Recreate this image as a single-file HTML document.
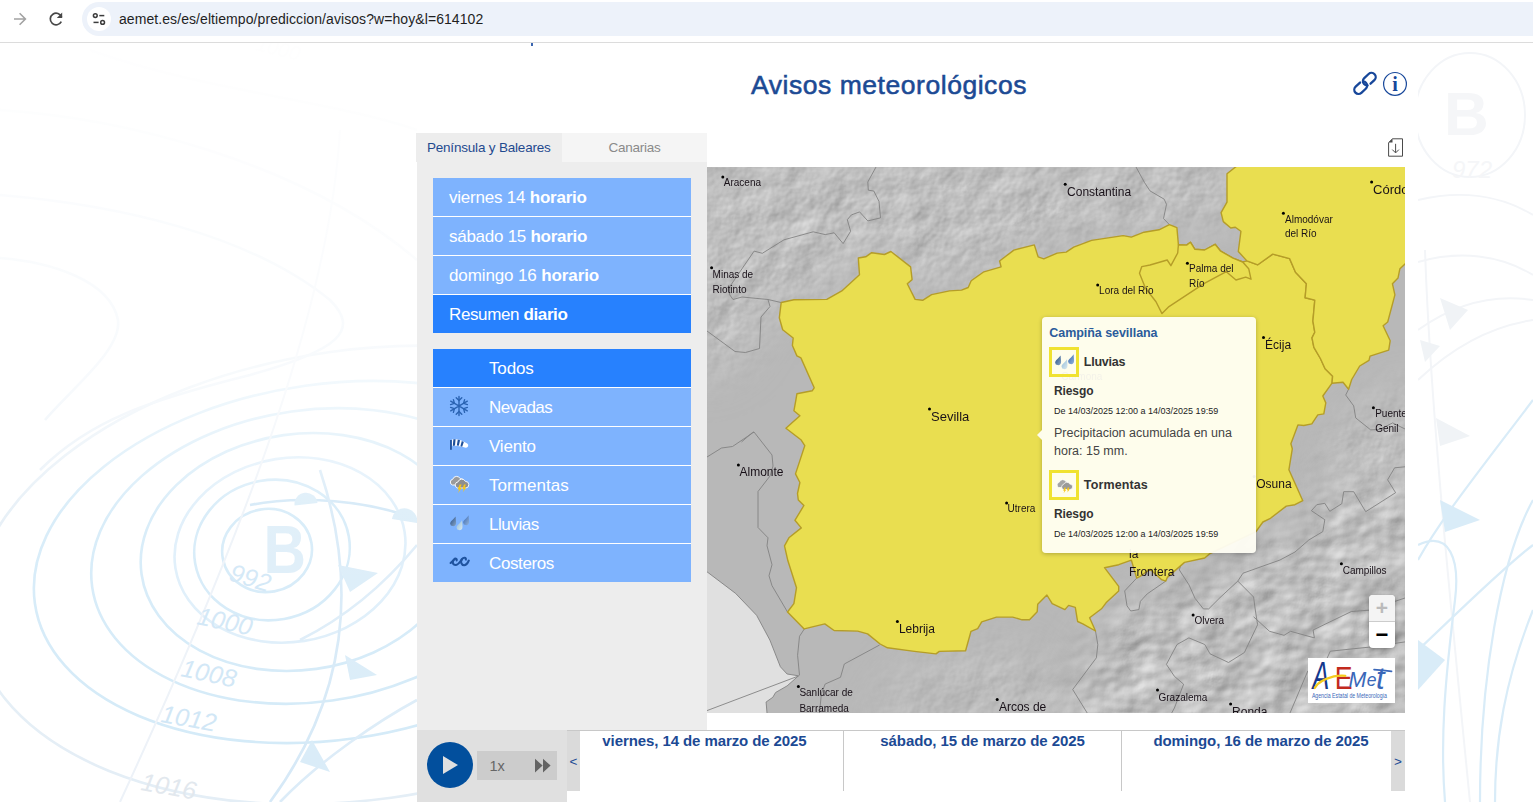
<!DOCTYPE html>
<html lang="es">
<head>
<meta charset="utf-8">
<title>Avisos meteorológicos</title>
<style>
*{box-sizing:border-box;margin:0;padding:0}
html,body{width:1533px;height:802px;overflow:hidden;background:#fff}
body{position:relative;font-family:"Liberation Sans",sans-serif;color:#222}
.abs{position:absolute}
/* browser chrome */
#chrome{left:0;top:0;width:1533px;height:43px;background:#fff;border-bottom:1px solid #dcdcdc}
#pill{left:82px;top:2px;width:1470px;height:34px;border-radius:17px;background:#edf2fa}
#site{left:87px;top:7px;width:24px;height:24px;border-radius:12px;background:#fff}
#url{left:119px;top:10px;font-size:14px;line-height:18px;color:#1f1f1f;white-space:nowrap;letter-spacing:0.075px}
/* page */
#content{left:417px;top:43px;width:1001px;height:759px;background:#fff}
#h1{left:751px;top:67px;font-size:26.5px;line-height:36px;font-weight:normal;-webkit-text-stroke:0.55px #1c4a94;color:#1c4a94;white-space:nowrap;letter-spacing:0.54px}
/* sidebar */
#side{left:417px;top:133px;width:290px;height:597px;background:#ededed}
.tab{top:133px;height:29px;width:145px;font-size:13.5px;line-height:29px;text-align:center;white-space:nowrap}
#tab1{left:416.3px;letter-spacing:-0.19px;color:#1f4a8f;background:#ededed}
#tab2{left:562px;letter-spacing:-0.28px;color:#8a8a8a;background:#f5f5f5}
.btn{left:433px;width:258px;height:39px;background:#7eb3fe;border-bottom:1px solid #fff;color:#fff;font-size:17px;line-height:40px;padding-left:16px;white-space:nowrap}
.btn.sel{background:#2781fe}
.btn b{font-weight:bold}
.fbtn{padding-left:56px}
/* player */
#player{left:417px;top:730px;width:150px;height:72px;background:#e0e0e0}
#play{left:426.5px;top:742px;width:46px;height:46px;border-radius:50%;background:#024f9d}
#speed{left:477px;top:751px;width:80px;height:29px;background:#cccccc}
/* timeline */
#tl{left:567px;top:730px;width:838px;height:61px;background:#fff;border-top:1px solid #c8c8c8}
.tlb{top:731px;width:13px;height:60px;background:#dadada;color:#1c4a94;font-size:13.5px;line-height:61px;text-align:center}
.day{top:731px;height:60px;width:278px;border-right:1px solid #c8c8c8;text-align:center;font-weight:bold;font-size:15px;line-height:20px;color:#1c4a94;white-space:nowrap;letter-spacing:-0.09px}
/* map */
#map{left:707px;top:167px;width:698px;height:546px;overflow:hidden;background:#b5b5b5}
.lbl{position:absolute;font-size:11px;line-height:15px;color:#111;white-space:nowrap}
.lbl.big{font-size:12px}
.dot{position:absolute;width:3px;height:3px;border-radius:50%;background:#000}

#popup{left:1042px;top:317px;width:214px;height:236px;background:rgba(255,254,244,0.95);border-radius:4px;box-shadow:0 1px 4px rgba(0,0,0,0.25)}
#parrow{left:1037px;top:430px;width:0;height:0;border-top:5px solid transparent;border-bottom:5px solid transparent;border-right:5px solid rgba(255,254,244,0.96)}
.pt{white-space:nowrap;line-height:15px}
.ico{width:30px;height:30px;border:3px solid #f0e231}
#zoomc{left:1369px;top:595px;width:26px;height:53px;border-radius:4px;background:#fff;box-shadow:0 1px 4px rgba(0,0,0,0.35);overflow:hidden;font-family:"Liberation Sans",sans-serif;font-weight:bold;text-align:center}
#zoomc .zp{height:27px;line-height:25px;font-size:21px;color:#bbb;background:#f4f4f4;border-bottom:1px solid #ccc}
#zoomc .zm{height:26px;line-height:26px;font-size:22px;color:#000}
#logo{left:1308px;top:658px;width:87px;height:45px;background:#fff}
</style>
</head>
<body>
<div id="content" class="abs"></div>
<!--BG-->
<svg id="bgl" class="abs" style="left:0;top:43px" width="417" height="759" viewBox="0 43 417 759">
<defs>
<linearGradient id="fadeL" x1="0" y1="43" x2="0" y2="802" gradientUnits="userSpaceOnUse">
<stop offset="0" stop-color="#fff" stop-opacity="0.95"/><stop offset="0.45" stop-color="#fff" stop-opacity="0.7"/><stop offset="0.62" stop-color="#fff" stop-opacity="0.15"/><stop offset="1" stop-color="#fff" stop-opacity="0"/>
</linearGradient>
<filter id="soft"><feGaussianBlur stdDeviation="0.7"/></filter>
</defs>
<g fill="none" stroke="#d3eaf8" stroke-width="2.6" filter="url(#soft)">
<ellipse cx="267" cy="550.5" rx="45" ry="41.5" transform="rotate(-10 267 550)"/>
<ellipse cx="272" cy="550" rx="78" ry="70" transform="rotate(-10 272 550)"/>
<ellipse cx="290" cy="550" rx="116" ry="92" transform="rotate(-9 290 550)" stroke="#ddeefa"/>
<ellipse cx="300" cy="552" rx="160" ry="118" transform="rotate(-8 300 552)"/>
<ellipse cx="312" cy="556" rx="222" ry="146" transform="rotate(-8 312 556)"/>
<ellipse cx="330" cy="562" rx="298" ry="178" transform="rotate(-8 330 562)"/>
<ellipse cx="360" cy="575" rx="390" ry="225" transform="rotate(-8 360 575)" stroke="#e4eef6"/>
<path d="M0,195 C120,205 250,235 330,300 C360,330 340,350 250,375 C150,400 90,420 40,470" stroke="#e6eff7"/>
<path d="M0,258 C50,262 110,280 118,320 C122,350 70,390 45,420" stroke="#e6eff7"/>
<path d="M0,110 C120,118 300,160 417,260" stroke="#eef3f8"/>
<path d="M90,50 C200,90 330,100 417,130" stroke="#f1f4f8"/>
<path d="M250,505 C300,495 370,500 417,520" stroke="#cfe6f6" stroke-width="2.6"/>
<path d="M320,470 C350,560 360,680 270,802" stroke="#d6e9f7" stroke-width="2.6"/>
<path d="M417,545 C380,590 340,620 300,640" stroke="#dcecf8"/>
<path d="M417,700 C380,720 320,760 280,802" stroke="#dcecf8"/>
<path d="M340,130 C330,300 250,520 120,802" stroke="#edf2f8" stroke-width="2"/>
</g>
<g fill="#d9ecf8" filter="url(#soft)">
<path d="M338,565 L378,573 L350,592 Z"/><path d="M345,655 L377,675 L350,680 Z"/><path d="M312,740 L330,772 L300,762 Z"/>
<path d="M294.5,505.5 A11.5,11.5 0 0 1 317.5,503 Z"/><path d="M392,519 A12.5,12.5 0 0 1 417,523 Z"/>
</g>
<g font-family="'Liberation Sans',sans-serif" font-style="italic" fill="#cfe6f6" font-size="25">
<text x="263.5" y="573" font-style="normal" font-weight="bold" font-size="68" fill="#dcedf8" textLength="42.5" lengthAdjust="spacingAndGlyphs">B</text>
<text x="228" y="580" transform="rotate(17 228 580)">992</text>
<text x="196" y="624" transform="rotate(12 196 624)">1000</text>
<text x="180" y="676" transform="rotate(12 180 676)">1008</text>
<text x="160" y="722" transform="rotate(10 160 722)">1012</text>
<text x="140" y="790" transform="rotate(10 140 790)" fill="#e2e8ee">1016</text>
<text x="255" y="50" transform="rotate(14 255 50)" fill="#eff1f4" font-size="20">1000</text>
</g>
<rect x="0" y="43" width="417" height="759" fill="url(#fadeL)"/>
</svg>
<svg id="bgr" class="abs" style="left:1418px;top:43px" width="115" height="759" viewBox="1418 43 115 759">
<g fill="none" stroke="#f3f5f8" stroke-width="2">
<ellipse cx="1470" cy="115" rx="55" ry="62"/>
<path d="M1418,200 C1460,190 1500,195 1533,215"/><path d="M1418,262 C1460,250 1500,255 1533,275"/>
<path d="M1418,330 C1460,300 1500,295 1533,300"/><path d="M1425,250 C1430,400 1450,600 1470,802"/>
<path d="M1418,380 C1460,340 1500,325 1533,320"/>
</g>
<g fill="none" stroke="#d9ecf8" stroke-width="2.2">
<path d="M1418,545 C1450,530 1460,560 1455,600 C1445,680 1440,740 1445,802" />
<path d="M1533,400 C1480,470 1440,520 1418,560"/>
<path d="M1533,500 C1500,560 1480,680 1480,802"/>
<path d="M1533,610 C1505,680 1495,740 1495,802"/>
<path d="M1418,650 C1440,630 1500,570 1533,545"/>
</g>
<g fill="#d9ecf8">
<path d="M1440,500 L1480,520 L1445,532 Z"/><path d="M1418,640 L1445,660 L1418,690 Z"/>
</g>
<g fill="#f0f3f6"><path d="M1436,418 L1470,436 L1440,446 Z"/><path d="M1440,298 L1468,310 L1450,330 Z"/><path d="M1420,340 L1440,346 L1425,362 Z"/></g>
<g font-family="'Liberation Sans',sans-serif" fill="#f5f6f8">
<text x="1444" y="135" font-weight="bold" font-size="62">B</text>
<text x="1452" y="178" font-style="italic" font-size="24">972</text>
</g>
</svg>
<div class="abs" style="left:531px;top:43px;width:2px;height:3px;background:#3a66b0"></div>
<!--/BG-->

<div id="chrome" class="abs"></div>
<div id="pill" class="abs"></div>
<div id="site" class="abs"></div>
<div id="url" class="abs">aemet.es/es/eltiempo/prediccion/avisos?w=hoy&amp;l=614102</div>

<div id="h1" class="abs">Avisos meteorológicos</div>

<div id="side" class="abs"></div>
<div id="tab1" class="abs tab">Península y Baleares</div>
<div id="tab2" class="abs tab">Canarias</div>

<div class="abs btn" style="top:178px;letter-spacing:-0.222px">viernes 14 <b>horario</b></div>
<div class="abs btn" style="top:217px;letter-spacing:-0.265px">sábado 15 <b>horario</b></div>
<div class="abs btn" style="top:256px;letter-spacing:-0.117px">domingo 16 <b>horario</b></div>
<div class="abs btn sel" style="top:295px;border-bottom-color:#ededed;letter-spacing:-0.379px">Resumen <b>diario</b></div>

<div class="abs btn fbtn sel" style="top:349px;letter-spacing:-0.14px">Todos</div>
<div class="abs btn fbtn" style="top:388px;letter-spacing:-0.557px">Nevadas</div>
<div class="abs btn fbtn" style="top:427px;letter-spacing:-0.2px">Viento</div>
<div class="abs btn fbtn" style="top:466px;letter-spacing:0.033px">Tormentas</div>
<div class="abs btn fbtn" style="top:505px;letter-spacing:-0.443px">Lluvias</div>
<div class="abs btn fbtn" style="top:544px;border-bottom-color:#ededed;letter-spacing:-0.387px">Costeros</div>

<div id="player" class="abs"></div>
<div id="play" class="abs"></div>
<div id="speed" class="abs"></div>

<div id="tl" class="abs"></div>
<div class="abs day" style="left:566px">viernes, 14 de marzo de 2025</div>
<div class="abs day" style="left:844px">sábado, 15 de marzo de 2025</div>
<div class="abs day" style="left:1122px;border-right:none">domingo, 16 de marzo de 2025</div>
<div class="abs tlb" style="left:567px">&lt;</div>
<div class="abs tlb" style="left:1391px;width:14px">&gt;</div>

<!--MAP-->
<svg id="mapsvg" class="abs" style="left:707px;top:167px" width="698" height="546" viewBox="707 167 698 546">
<defs>
<filter id="hill" x="0" y="0" width="100%" height="100%" color-interpolation-filters="sRGB">
<feTurbulence type="fractalNoise" baseFrequency="0.03" numOctaves="4" seed="7" result="n"/>
<feColorMatrix in="n" type="matrix" values="0 0 0 0 0  0 0 0 0 0  0 0 0 0 0  1 0 0 0 0" result="a"/>
<feDiffuseLighting in="a" surfaceScale="1.3" diffuseConstant="1.06" lighting-color="#ffffff" result="l">
<feDistantLight azimuth="225" elevation="45"/>
</feDiffuseLighting>
</filter>
<filter id="hill2" x="0" y="0" width="100%" height="100%" color-interpolation-filters="sRGB">
<feTurbulence type="fractalNoise" baseFrequency="0.026 0.034" numOctaves="3" seed="23" result="n"/>
<feColorMatrix in="n" type="matrix" values="0 0 0 0 0  0 0 0 0 0  0 0 0 0 0  1 0 0 0 0" result="a"/>
<feDiffuseLighting in="a" surfaceScale="2.1" diffuseConstant="1.06" lighting-color="#ffffff" result="l">
<feDistantLight azimuth="225" elevation="45"/>
</feDiffuseLighting>
</filter>
<filter id="blur30" x="-30%" y="-30%" width="160%" height="160%"><feGaussianBlur stdDeviation="24"/></filter>
<mask id="mntmask" maskUnits="userSpaceOnUse" x="707" y="167" width="698" height="546">
<rect x="707" y="167" width="698" height="546" fill="#000"/>
<g filter="url(#blur30)" fill="#fff">
<path d="M690,150 L1240,150 L1240,215 L1060,240 L1000,260 L960,285 L920,295 L890,245 L855,250 L850,275 L820,295 L770,300 L740,360 L690,380 Z"/>
<path d="M1420,380 L1420,520 L1330,520 L1340,430 Z"/>
<path d="M860,740 L900,670 L1000,640 L1040,660 L1100,740 Z" opacity="0.6"/>
</g>
</mask>
<mask id="mntmask2" maskUnits="userSpaceOnUse" x="707" y="167" width="698" height="546">
<rect x="707" y="167" width="698" height="546" fill="#000"/>
<g filter="url(#blur30)" fill="#fff">
<path d="M1420,480 L1420,740 L1060,740 L1090,650 L1130,600 L1200,580 L1310,520 L1340,470 Z"/>
</g>
</mask>
<clipPath id="mapclip"><rect x="707" y="167" width="698" height="546"/></clipPath>
</defs>
<g clip-path="url(#mapclip)">
<rect x="707" y="167" width="698" height="546" fill="#b8b8b8"/>
<g mask="url(#mntmask)"><rect id="hillrect" x="707" y="167" width="698" height="546" filter="url(#hill)"/></g>
<g mask="url(#mntmask2)"><rect x="707" y="167" width="698" height="546" filter="url(#hill2)"/></g>
<!-- sea -->
<path id="sea" d="M707,571.8 L735.6,593.4 L756.6,615.3 L769.9,640.1 L780.4,666.8 L787.1,674 L798.5,675.8 L787.1,685.9 L775.6,692.5 L772.8,697.3 L766.1,702 L767,713 L707,713 Z" fill="#e0e0e0"/>
<!-- zone boundaries -->
<g fill="none" stroke="#828282" stroke-width="0.9" stroke-linejoin="round">
<path d="M876,167 L867.8,182 L868.3,190.2 L873.8,191 L879,201.4 L880.5,217.9 L867.8,220.9 L859.6,211.9 L851.4,214.9 L847.3,219.7 L850.6,231.3 L843.1,243.6 L834.2,232.8 L825.2,234.6 L813.2,231.8 L784,239.8 L762.3,253.3 L754.1,251.1 L729.5,287 L729.5,294.5 L733,299.5 L742,297 L768,299.5 L781,302.5"/>
<path d="M768,299.5 L770,306.5 L761,317 L759.5,348.5 L745.5,352.5 L735,351.5 L707,331"/>
<path d="M707,457 L721.5,448 L732.5,446.5 L754,432 L772,455 L773,466 L770,476 L758,491.5 L758,527.5 L768,537.8 L767,545.8 L772,564.7 L769,575.7 L772,585.7 L787.5,612"/>
<path d="M741.5,442 L752.5,432.5 L754,432"/>
<path d="M804.3,629 L799.5,636.3 L797.6,655.3 L799.5,675.4"/>
<path d="M879.6,645 L844.3,664 L840.5,677.3 L825.2,684 L821.4,693.5 L819.5,713"/>
<path d="M707,571.8 L735.6,593.4 L756.6,615.3 L769.9,640.1 L780.4,666.8 L787.1,674 L798.5,675.8 L787.1,685.9 L775.6,692.5 L772.8,697.3 L766.1,702 L767,713"/><path d="M798.5,676 L707,710.6"/>
<path d="M1136,167 L1144.5,182.5 L1150,190.9 L1164.2,199.2 L1166.5,204.4 L1163.5,218.6 L1169.4,224.6"/>
<path d="M1348.6,389.2 L1345.7,395 L1353.7,405.9 L1355.7,417.9 L1370.7,429.9 L1379.7,429.5 L1392.6,422.9 L1405,429"/>
<path d="M1180.8,565.4 L1179.3,569.9 L1189,584.9 L1195,598.3 L1203.4,608.9 L1208.7,608.9 L1220,597.6 L1237.8,581.1 L1253.6,597 L1255,608 L1257.6,624.7 L1244.4,652.5 L1228.5,662.5 L1210,653.8 L1204.8,644.5 L1188.9,637.9 L1177,644.5 L1166.4,664.4 L1174.4,676.3 L1183.6,684.2 L1174.4,708 L1171.7,713"/>
<path d="M1405,466.8 L1394.6,467.8 L1387.6,479.8 L1395.6,492.7 L1365.7,511.7 L1353.7,491.7 L1343.7,491.7 L1341.8,503.7 L1329.8,511.3 L1324.8,503.3 L1316.8,504.7 L1311.4,510.7 L1324.8,519.7 L1322.8,531.6 L1308.8,540 L1295,552 L1280,560 L1243,573.2 L1237.8,581.1"/>
<path d="M1253.6,616.8 L1269.5,631.3 L1284,635.3 L1290.6,631.3 L1314.4,637.9 L1313.1,630 L1351.4,611.5 L1368.6,610.2 L1405,598"/>
<path d="M1136.7,578.1 L1124.7,590.9 L1127,605.8 L1130.7,611 L1138.9,609.6 L1140.4,601.3 L1147.2,593.9 L1165.8,581.1"/>
<path d="M1095.5,631 L1097.8,644.7 L1096.4,657.8 L1072.7,689.5 L1087.2,713"/>
<path d="M1405,641.9 L1368.6,647.2 L1330.3,651.2 L1323.6,665.7 L1307.8,671 L1290,713"/>
</g>
<!-- yellow zones -->
<g fill="#e9de50" stroke="#b59d28" stroke-width="1.4" stroke-linejoin="round">
<path id="zmain" d="M781.2,302.5 L793.9,299.8 L826.8,299.4 L841.8,290.9 L859.5,274.7 L858.3,258 L865.7,256.8 L871.7,252.7 L884.4,254.5 L890.9,251.5 L910.6,266.9 L912.1,279.6 L907.3,283.7 L915.1,299.4 L922.6,300.3 L931.6,294.6 L949.5,290.9 L961.5,290.1 L968.2,287.5 L971.2,280.8 L983.9,271.8 L1001.1,266.9 L999.6,261 L1013.9,250.1 L1034.3,244.9 L1038.1,256.8 L1043.8,258.8 L1057.2,253.1 L1066.2,252.1 L1073.7,247.1 L1091.6,240.4 L1123.1,235.6 L1131.3,237.1 L1144,232.2 L1159,229.8 L1169.4,224.6 L1176.9,227.6 L1178.4,244.8 L1186.6,245.1 L1190.4,242.2 L1194.9,249.3 L1204.6,250 L1215.1,244.3 L1220.3,250.8 L1233,258.2 L1242.7,262 L1246.9,260.9 L1257.8,264.8 L1272.7,254.1 L1289.6,258.6 L1295.5,272.3 L1306.4,283.7 L1305.1,297.7 L1314.8,300.1 L1312.9,321.1 L1314.8,332.3 L1312,337.9 L1313.9,347.3 L1320.4,358.5 L1325.1,368.8 L1332.6,376.2 L1332,383.2 L1322.8,396 L1325.8,402.9 L1323.8,413.9 L1317.8,414.9 L1311.8,423.9 L1303.8,425.5 L1297.9,424.9 L1290.9,443.8 L1292.3,448.8 L1288.9,469.8 L1302.8,500.7 L1294.9,504.7 L1286.3,506.1 L1269.9,518.7 L1262.9,522 L1256,531.6 L1210,553.5 L1204.7,558 L1184.5,562.4 L1167.3,577.4 L1165.8,581.1 L1161.4,579.6 L1150.1,569.2 L1139.7,576.6 L1136.7,578.1 L1132.9,565.4 L1131.4,560.2 L1118.7,564.7 L1104.5,567.7 L1118.7,586.4 L1118.7,590.9 L1106,602.8 L1101.5,608.8 L1089.6,617.8 L1095.5,631 L1082.8,623.8 L1077.6,621.5 L1075.3,607.3 L1068.6,605.4 L1064.9,609.6 L1052.2,603.6 L1046.9,595 L1037.7,604.3 L1037.2,611.8 L1029.5,619.8 L1022.1,619.8 L1012.7,617.1 L996.5,617.1 L981.7,621.8 L977.7,628.6 L971,631.3 L965.6,650.8 L939.3,651.4 L936,653.9 L914.4,651.4 L887.5,647.8 L880.1,644 L867.6,633.9 L857.7,631.1 L834.1,630.5 L824.8,623.9 L804.2,628.9 L787.5,612 L793.9,603.6 L796.5,587.7 L787.9,560.8 L784.5,545.8 L788.9,537.8 L801.3,527.9 L794.9,520.3 L803.9,505.5 L798.3,500 L797.5,493.5 L799.9,482.5 L795.5,473.9 L804.8,445.6 L800.9,439.7 L785.9,428.3 L799.9,415.7 L793.9,410.8 L795.9,399.8 L796.9,393.8 L812.2,390.8 L814.2,387.8 L800.9,357.9 L796.9,355.9 L792.4,345.5 L793.2,338 L782.7,329.8 L779.3,317.8 Z"/>
<path id="zpalma" d="M1139.5,273.3 L1141.8,266.6 L1150,265 L1167.2,260 L1170.9,265.7 L1177.7,253 L1178.4,244.8 L1186.6,245.1 L1190.4,242.2 L1194.9,249.3 L1204.6,250 L1215.1,244.3 L1220.3,250.8 L1233,258.2 L1242.7,262 L1248.7,268.7 L1251,279.2 L1245.7,277.2 L1236,280 L1226.3,271.7 L1203.9,283.7 L1169,306.6 L1162,313.6 L1156,301.7 L1145.5,288.3 Z"/>
<path id="zcord" d="M1236.8,166 L1227,173.7 L1227,202.2 L1221.1,212.6 L1223.3,221.6 L1230.8,228 L1235.3,227.3 L1240.9,231.3 L1238.3,251.5 L1246.9,260.9 L1257.8,264.8 L1272.7,254.1 L1289.6,258.6 L1295.5,272.3 L1306.4,283.7 L1305.1,297.7 L1314.8,300.1 L1312.9,321.1 L1314.8,332.3 L1312,337.9 L1313.9,347.3 L1320.4,358.5 L1325.1,368.8 L1332.6,376.2 L1332,383.2 L1343,382.3 L1348.6,389.2 L1351.7,379.5 L1359.7,366 L1369,360.3 L1370,356.2 L1388.7,350.1 L1390.2,340.7 L1383.1,325.7 L1387.7,322 L1394.9,294.9 L1392.4,283.7 L1398,278.1 L1399.9,268.7 L1406,263 L1406,166 Z"/>
</g>
<!-- labels -->
<g font-family="'Liberation Sans',sans-serif" fill="#170f17" font-size="10" transform="translate(-0.3 0.9)" opacity="0.99">
<g fill="#000" transform="translate(0.4 -0.3)">
<circle cx="722.7" cy="176.4" r="1.5"/><circle cx="711.5" cy="267.2" r="1.5"/><circle cx="929.4" cy="408.3" r="1.5"/>
<circle cx="1065.1" cy="183.7" r="1.5"/><circle cx="1371.5" cy="181.4" r="1.5"/><circle cx="1283.3" cy="212.7" r="1.5"/>
<circle cx="1187.3" cy="262.6" r="1.5"/><circle cx="1097.6" cy="284.3" r="1.5"/><circle cx="1263.4" cy="337" r="1.5"/>
<circle cx="1373.3" cy="407.1" r="1.5"/><circle cx="738.3" cy="464.3" r="1.5"/><circle cx="1006.5" cy="502.3" r="1.5"/>
<circle cx="897.3" cy="620.8" r="1.5"/><circle cx="798.3" cy="685.9" r="1.5"/><circle cx="997.1" cy="698.9" r="1.5"/>
<circle cx="1254" cy="476" r="1.5"/><circle cx="1341.3" cy="563.1" r="1.5"/><circle cx="1193" cy="614.4" r="1.5"/>
<circle cx="1157.4" cy="689.5" r="1.5"/><circle cx="1230.5" cy="703.4" r="1.5"/>
</g>
<text x="724.1" y="184.8">Aracena</text>
<text x="712.9" y="277">Minas de</text><text x="712.9" y="292">Riotinto</text>
<text x="931.3" y="419.9" font-size="13">Sevilla</text>
<text x="1067.4" y="195.0" font-size="12">Constantina</text>
<text x="1373.4" y="193.1" font-size="13">Córdoba</text>
<text x="1285.3" y="222.2">Almodóvar</text><text x="1285.3" y="236.4">del Río</text>
<text x="1189.4" y="271.6">Palma del</text><text x="1189.4" y="285.8">Río</text>
<text x="1099.4" y="293.6">Lora del Río</text>
<text x="1265.4" y="347.8" font-size="12">Écija</text>
<text x="1375.5" y="416.0">Puente</text><text x="1375.5" y="431.0">Genil</text>
<text x="739.8" y="475.2" font-size="12">Almonte</text>
<text x="1007.9" y="511.3">Utrera</text>
<text x="899.2" y="631.7" font-size="12">Lebrija</text>
<text x="799.7" y="695.6">Sanlúcar de</text><text x="799.7" y="710.8">Barrameda</text>
<text x="999.2" y="710.1" font-size="12">Arcos de</text>
<text x="1256.5" y="487.0" font-size="12">Osuna</text>
<text x="1129.4" y="539.1" font-size="12">Morón de</text><text x="1129.4" y="557.3" font-size="12">la</text><text x="1129.4" y="575.5" font-size="12">Frontera</text>
<text x="1343" y="572.9">Campillos</text>
<text x="1194.8" y="623.5">Olvera</text>
<text x="1158.8" y="699.8">Grazalema</text>
<text x="1232.4" y="714.7" font-size="12">Ronda</text>
<text x="1061.5" y="379">Carmona</text>
</g>
</g>
</svg>
<!--/MAP-->
<!--POPUP-->
<div id="popup" class="abs">
<div class="pt abs" style="left:7.3px;top:9px;color:#2b5b9b;font-weight:bold;font-size:12.5px;letter-spacing:-0.05px">Campiña sevillana</div>
<div class="ico abs" style="left:7px;top:30px"></div>
<div class="pt abs" style="left:41.8px;top:38px;font-weight:bold;font-size:12.5px;color:#333;letter-spacing:-0.25px">Lluvias</div>
<div class="pt abs" style="left:12px;top:67px;font-weight:bold;font-size:12px;color:#333;letter-spacing:-0.1px">Riesgo</div>
<div class="pt abs" style="left:12px;top:87px;font-size:9px;color:#222">De 14/03/2025 12:00 a 14/03/2025 19:59</div>
<div class="pt abs" style="left:12px;top:107px;font-size:12.5px;color:#444;line-height:18px;white-space:normal;width:190px">Precipitacion acumulada en una hora: 15 mm.</div>
<div class="ico abs" style="left:7px;top:153px"></div>
<div class="pt abs" style="left:41.8px;top:161px;font-weight:bold;font-size:12.5px;color:#333;letter-spacing:0.13px">Tormentas</div>
<div class="pt abs" style="left:12px;top:190px;font-weight:bold;font-size:12px;color:#333;letter-spacing:-0.1px">Riesgo</div>
<div class="pt abs" style="left:12px;top:210px;font-size:9px;color:#222">De 14/03/2025 12:00 a 14/03/2025 19:59</div>
<svg class="abs" style="left:0;top:0" width="214" height="236" viewBox="1042 317 214 236">
<g transform="translate(605 -161)">
<path d="M455.6,516.4 C455.8,520 456.4,522 455.9,524.2 A3,3 0 0 1 450.1,523.4 C450.5,521 453.4,519.6 455.6,516.4 Z" fill="url(#d1)"/>
<path d="M462,520.2 C462.2,524 462.8,526 462.3,528.2 A3,3 0 0 1 456.5,527.4 C456.9,525 459.8,523.6 462,520.2 Z" fill="url(#d2)"/>
<path d="M468.6,515.2 C468.8,519 469.4,521 468.9,523.2 A3,3 0 0 1 463.1,522.4 C463.5,520 466.4,518.6 468.6,515.2 Z" fill="url(#d3)"/>
</g>
<g transform="translate(683.1 84.5) scale(0.83)">
<g stroke="#fff" stroke-width="0.9">
<path d="M452.6,485.6 A3.4,3.4 0 0 1 453.2,479.2 A4.4,4.4 0 0 1 461.4,478.6 A3.2,3.2 0 0 1 462.4,485.6 Z" fill="#a5a5a5"/>
<path d="M458,488 A3.3,3.3 0 0 1 458.4,481.8 A4.3,4.3 0 0 1 466,481.4 A3.3,3.3 0 0 1 466,488 Z" fill="#999"/>
</g>
<path d="M459.4,485.4 L458,489.4 H459.4 L458.4,492.6 L461.6,488.2 H460.2 L461.2,485.4 Z" fill="#f6c61a"/>
<path d="M463.4,485.4 L462.4,489 H463.6 L463,491.6 L465.8,487.8 H464.6 L465.4,485.4 Z" fill="#f6c61a"/>
</g>
</svg>
</div>
<div id="parrow" class="abs"></div>
<!--/POPUP-->
<!--CTRL-->
<div id="zoomc" class="abs"><div class="zp">+</div><div class="zm">−</div></div>
<div id="logo" class="abs">
<svg width="87" height="45" viewBox="0 0 87 45">
<g font-family="'Liberation Sans',sans-serif" font-style="italic">
<text transform="translate(4.6 31) scale(0.66 1)" font-size="38" fill="#14378c">A</text>
<text transform="translate(26.8 30.8) scale(0.86 1)" font-size="31" font-style="normal" fill="#c22a1e">E</text>
<text transform="translate(40.5 29.2) scale(0.95 1)" font-size="22.5" fill="#3a67b8">M</text>
<text transform="translate(58.8 28)" font-size="17.5" fill="#3a67b8">e</text>
<text transform="translate(68 30.6)" font-size="31" fill="#3a67b8">t</text>
</g>
<path d="M66,11.6 C72,12 78,12.6 83.6,13.4" fill="none" stroke="#3a67b8" stroke-width="1.6" stroke-linecap="round"/>
<path d="M6.7,30 C9,25 15,21.4 25.9,18.4 C30,17.6 34,17.6 37.3,17.8" fill="none" stroke="#f5cc1e" stroke-width="2.2" stroke-linecap="round"/>
<text x="3.9" y="39.8" font-family="'Liberation Sans',sans-serif" font-size="6.3" fill="#3a67b8" textLength="75" lengthAdjust="spacingAndGlyphs">Agencia Estatal de Meteorología</text>
</svg>
</div>
<!--/CTRL-->

<!--ICONS-->
<svg class="abs" style="left:0;top:0" width="120" height="42" viewBox="0 0 120 42">
<g fill="none" stroke="#a2a2a2" stroke-width="1.6" stroke-linecap="butt" stroke-linejoin="miter">
<path d="M14,19 H25 M19.6,13.2 L25.4,19 L19.6,24.8"/>
</g>
<g fill="none" stroke="#474747" stroke-width="1.7">
<path d="M61.6,17.2 A5.8,5.8 0 1 0 61.3,21.6"/>
</g>
<path d="M62.2,12.6 V18 H56.8 Z" fill="#474747"/>
<g fill="none" stroke="#3c3c3c" stroke-width="1.5">
<circle cx="95.3" cy="15.6" r="1.9"/><path d="M99.3,15.6 H104.3"/>
<circle cx="102.6" cy="22.4" r="1.9"/><path d="M93.5,22.4 H98.6"/>
</g>
</svg>
<svg class="abs" style="left:1348px;top:68px" width="64" height="32" viewBox="1348 68 64 32">
<g fill="none" stroke="#17479a" stroke-width="2.3" stroke-linecap="round">
<rect x="-7.2" y="-4.2" width="14.4" height="8.4" rx="4.2" transform="translate(1360.7,87.7) rotate(-43)" stroke-dasharray="33 3.4" stroke-dashoffset="-9.5"/>
<rect x="-7.2" y="-4.2" width="14.4" height="8.4" rx="4.2" transform="translate(1369.3,79.1) rotate(-43)" stroke-dasharray="33 3.4" stroke-dashoffset="-27.5"/>
</g>
<circle cx="1395" cy="83.9" r="11.4" fill="#fff" stroke="#17479a" stroke-width="1.2"/>
<text x="1395" y="90.6" text-anchor="middle" font-family="'Liberation Serif',serif" font-weight="bold" font-size="20" fill="#17479a">i</text>
</svg>
<svg class="abs" style="left:1386px;top:136px" width="20" height="24" viewBox="1386 136 20 24">
<path d="M1392.5,138.8 H1402.5 V156.2 H1388.6 V142.6 Z" fill="#fff" stroke="#4a4a4a" stroke-width="1" stroke-linejoin="round"/>
<path d="M1388.6,142.6 H1392.5 V138.8 Z" fill="#4a4a4a"/>
<path d="M1395.6,143.8 V152.6 M1392.3,149.6 L1395.6,152.9 L1398.9,149.6" fill="none" stroke="#4a4a4a" stroke-width="1"/>
</svg>
<!-- sidebar icons -->
<svg class="abs" style="left:445px;top:388px" width="30" height="195" viewBox="445 388 30 195">
<defs>
<linearGradient id="d1" x1="0" y1="0" x2="1" y2="1"><stop offset="0" stop-color="#234c86"/><stop offset="1" stop-color="#8aa6c4"/></linearGradient>
<linearGradient id="d2" x1="0" y1="0" x2="1" y2="1"><stop offset="0" stop-color="#8fbbd8"/><stop offset="1" stop-color="#dbe9ee"/></linearGradient>
<linearGradient id="d3" x1="0" y1="0" x2="1" y2="1"><stop offset="0" stop-color="#3566b0"/><stop offset="1" stop-color="#93b3da"/></linearGradient>
</defs>
<!-- snow -->
<g stroke="#2a63b2" stroke-width="1.4" fill="none" stroke-linecap="round">
<path d="M459,396.4 V415.6 M450.7,401.2 L467.3,410.8 M450.7,410.8 L467.3,401.2"/>
<path d="M456.2,397.8 L459,400.6 L461.8,397.8 M456.2,414.2 L459,411.4 L461.8,414.2"/>
<path d="M450.6,404.6 L454.4,403.4 L453.4,399.6 M467.4,407.4 L463.6,408.6 L464.6,412.4"/>
<path d="M450.6,407.4 L454.4,408.6 L453.4,412.4 M467.4,404.6 L463.6,403.4 L464.6,399.6"/>
</g>
<!-- wind sock -->
<g>
<rect x="450.1" y="440" width="1.7" height="9.8" fill="#1d4f9a"/>
<path d="M452,439.6 C457,438.4 463,440.6 467.2,443.6 A2.3,2.3 0 0 1 465.6,447.8 C461,446.4 456,445 452,446.2 Z" fill="#fff"/>
<path d="M453.4,439.3 L455.6,439.2 L455,445.6 L452.8,446 Z M457.8,439.6 L460,440.2 L458.8,445.8 L456.8,445.4 Z M461.8,441 L463.8,442 L462.2,446.8 L460.4,446.2 Z" fill="#1d4f9a"/>
</g>
<!-- storm -->
<g stroke="#fff" stroke-width="0.9">
<path d="M452.4,485 A3,3 0 0 1 452.8,479.2 A4,4 0 0 1 460.2,478.6 A3,3 0 0 1 461.2,485 Z" fill="#9b9b9b"/>
<path d="M457.6,488 A3.1,3.1 0 0 1 458,481.9 A4,4 0 0 1 465.4,481.4 A3.2,3.2 0 0 1 465.6,488 Z" fill="#8e8e8e"/>
</g>
<path d="M459.6,484.6 L457.6,489.6 H459.2 L458,493 L461.8,488 H460.2 L461.6,484.6 Z" fill="#f6c61a"/>
<path d="M464,484.6 L462.4,489 H463.8 L463,492.2 L466.2,487.6 H464.8 L465.8,484.6 Z" fill="#f6c61a"/>
<!-- rain -->
<g>
<path d="M455.6,516.4 C455.8,520 456.4,522 455.9,524.2 A3,3 0 0 1 450.1,523.4 C450.5,521 453.4,519.6 455.6,516.4 Z" fill="url(#d1)"/>
<path d="M462,520.2 C462.2,524 462.8,526 462.3,528.2 A3,3 0 0 1 456.5,527.4 C456.9,525 459.8,523.6 462,520.2 Z" fill="url(#d2)"/>
<path d="M468.6,515.2 C468.8,519 469.4,521 468.9,523.2 A3,3 0 0 1 463.1,522.4 C463.5,520 466.4,518.6 468.6,515.2 Z" fill="url(#d3)"/>
</g>
<!-- coast -->
<g fill="none" stroke="#1f539f" stroke-width="2.1" stroke-linecap="round" stroke-linejoin="round">
<path d="M450.6,563 L453.6,560.2"/>
<path d="M456.6,560.4 C457.2,558.6 455.4,557.9 453.8,559.6 C452,561.6 452.6,565 455.6,565 C458.4,565 459.8,562 461.8,559.4"/>
<path d="M465.8,559.6 C466.4,557.4 463.6,556.9 461.8,559.4 C460.3,561.6 461.2,565.2 464.2,565.2 C466.8,565.2 467.8,562.4 468.8,560.6"/>
</g>
</svg>
<!-- player icons -->
<svg class="abs" style="left:420px;top:736px" width="145" height="60" viewBox="420 736 145 60">
<path d="M443,756.1 V774.1 L458,765.1 Z" fill="#e0e0e0"/>
<path d="M535,758.8 V772.4 L542.6,765.6 Z M543,758.8 V772.4 L550.6,765.6 Z" fill="#636363"/>
<text x="489.5" y="771" font-family="'Liberation Sans',sans-serif" font-size="14.5" fill="#666">1x</text>
</svg>
<!--/ICONS-->
</body>
</html>
